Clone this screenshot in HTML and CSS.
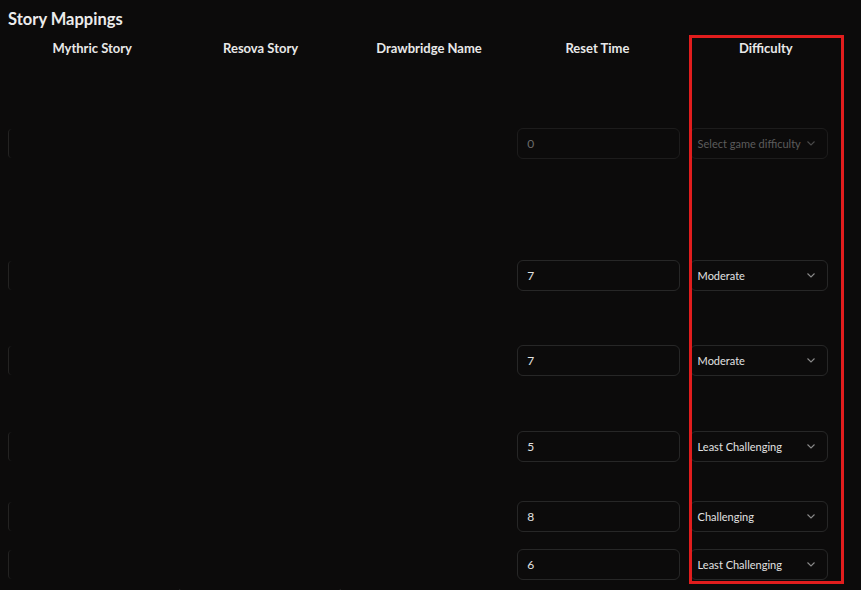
FILE: index.html
```html
<!DOCTYPE html>
<html lang="en">
<head>
    <meta charset="utf-8" />
    <title>Story Mappings</title>
    <link rel="stylesheet" href="styles.css">
</head>
<body>
    <main class="page">
        <h2 class="title">Story Mappings</h2>

        <div class="mapping-table">
            <!-- column headers -->
            <div class="row head">
                <div class="cell">Mythric Story</div>
                <div class="cell">Resova Story</div>
                <div class="cell">Drawbridge Name</div>
                <div class="cell">Reset Time</div>
                <div class="cell">Difficulty</div>
            </div>

            <div class="row row-1">
                <div class="cell"><span class="edge"></span></div>
                <div class="cell"></div>
                <div class="cell"></div>
                <div class="cell"><input class="field muted" type="text" value="0" disabled /></div>
                <div class="cell">
                    <div class="select muted"><span>Select game difficulty</span>
                        <svg width="8" height="5" viewBox="0 0 8 5"><polyline points="0.5,0.5 4,4 7.5,0.5" /></svg>
                    </div>
                </div>
            </div>

            <div class="row row-2">
                <div class="cell"><span class="edge"></span></div>
                <div class="cell"></div>
                <div class="cell"></div>
                <div class="cell"><input class="field" type="text" value="7" /></div>
                <div class="cell">
                    <div class="select"><span>Moderate</span>
                        <svg width="8" height="5" viewBox="0 0 8 5"><polyline points="0.5,0.5 4,4 7.5,0.5" /></svg>
                    </div>
                </div>
            </div>

            <div class="row row-3">
                <div class="cell"><span class="edge"></span></div>
                <div class="cell"></div>
                <div class="cell"></div>
                <div class="cell"><input class="field" type="text" value="7" /></div>
                <div class="cell">
                    <div class="select"><span>Moderate</span>
                        <svg width="8" height="5" viewBox="0 0 8 5"><polyline points="0.5,0.5 4,4 7.5,0.5" /></svg>
                    </div>
                </div>
            </div>

            <div class="row row-4">
                <div class="cell"><span class="edge"></span></div>
                <div class="cell"></div>
                <div class="cell"></div>
                <div class="cell"><input class="field" type="text" value="5" /></div>
                <div class="cell">
                    <div class="select"><span>Least Challenging</span>
                        <svg width="8" height="5" viewBox="0 0 8 5"><polyline points="0.5,0.5 4,4 7.5,0.5" /></svg>
                    </div>
                </div>
            </div>

            <div class="row row-5">
                <div class="cell"><span class="edge"></span></div>
                <div class="cell"></div>
                <div class="cell"></div>
                <div class="cell"><input class="field" type="text" value="8" /></div>
                <div class="cell">
                    <div class="select"><span>Challenging</span>
                        <svg width="8" height="5" viewBox="0 0 8 5"><polyline points="0.5,0.5 4,4 7.5,0.5" /></svg>
                    </div>
                </div>
            </div>

            <div class="row row-6">
                <div class="cell"><span class="edge"></span></div>
                <div class="cell"></div>
                <div class="cell"></div>
                <div class="cell"><input class="field" type="text" value="6" /></div>
                <div class="cell">
                    <div class="select"><span>Least Challenging</span>
                        <svg width="8" height="5" viewBox="0 0 8 5"><polyline points="0.5,0.5 4,4 7.5,0.5" /></svg>
                    </div>
                </div>
            </div>

            <div class="row row-7">
                <div class="cell"></div>
                <div class="cell"><div class="stub"></div></div>
            </div>
        </div>

        <!-- highlight round the difficulty column -->
        <div class="highlight"></div>
    </main>
</body>
</html>
```

FILE: styles.css
```css
/* Page */
html, body {
    margin: 0;
    height: 100%;
    overflow: hidden;
    background-color: #0c0b0b;
}

body {
    font-family: Lato, "Noto Sans", sans-serif;
    color: #e6e6e6;
}

.page {
    position: relative;
    padding: 8px;
}

/* Title */
.title {
    margin: 0;
    font-size: 16.5px;
    font-weight: 700;
    line-height: 22px;
    color: #ececec;
}

/* Table */
.mapping-table {
    width: 842px;
    margin-top: 10px;
}

.row {
    display: grid;
    grid-template-columns: repeat(5, 1fr);
    align-items: center;
}

.row.head {
    height: 16px;
    font-size: 13px;
    font-weight: 700;
    line-height: 16px;
    color: #e8e8e8;
}

.row.head .cell {
    justify-content: center;
}

.row-1 { height: 175px; }
.row-2 { height: 88px; }
.row-3 { height: 82px; }
.row-4 { height: 90px; }
.row-5 { height: 51px; }
.row-6 { height: 44px; }
.row-7 { height: 20px; align-items: start; }

.cell {
    display: flex;
    align-items: center;
    min-width: 0;
}

/* Left edge of the collapsed story field */
.edge {
    display: block;
    width: 3px;
    height: 29px;
    border-left: 1px solid #242322;
    border-radius: 4px 0 0 4px;
}

.stub {
    margin: 1px 0 0 2px;
    width: 162px;
    height: 20px;
    border: 1px solid #232222;
    border-top-color: transparent;
    border-radius: 6px;
}

/* Reset time input */
.field {
    box-sizing: border-box;
    margin-left: 4px;
    width: 163px;
    height: 31px;
    padding: 0 9px;
    border: 1px solid #272727;
    border-radius: 6px;
    background: transparent;
    font-family: inherit;
    font-size: 12px;
    color: #e2e2e2;
    outline: none;
}

.field.muted {
    border-color: #1d1c1c;
    color: #6a6a6a;
}

/* Difficulty dropdown */
.select {
    box-sizing: border-box;
    display: flex;
    align-items: center;
    justify-content: space-between;
    margin-left: 8px;
    width: 138px;
    height: 31px;
    padding: 0 12px 0 7px;
    border: 1px solid #272727;
    border-radius: 6px;
    font-size: 11px;
    white-space: nowrap;
    color: #e2e2e2;
}

.select svg polyline {
    fill: none;
    stroke: #8a8a8a;
    stroke-width: 1.1;
}

.select.muted {
    border-color: #1d1c1c;
    color: #5c5c5c;
}

.select.muted svg polyline {
    stroke: #4a4a4a;
}

/* Red outline */
.highlight {
    position: absolute;
    left: 689px;
    top: 35px;
    width: 149px;
    height: 543px;
    border: 3px solid #e11d1d;
}
```
